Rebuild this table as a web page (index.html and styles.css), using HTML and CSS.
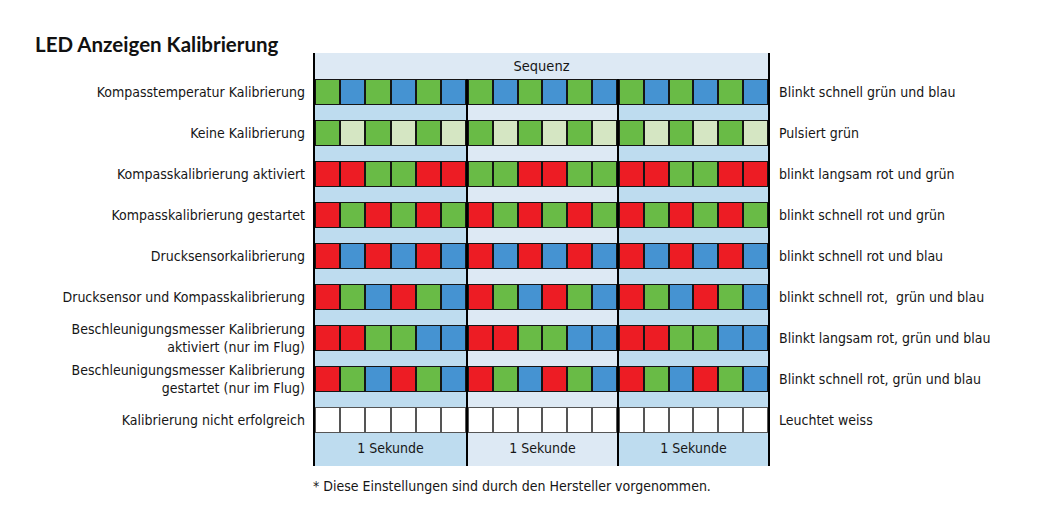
FILE: index.html
```html
<!DOCTYPE html>
<html lang="de">
<head>
<meta charset="utf-8">
<title>LED Anzeigen Kalibrierung</title>
<link rel="stylesheet" href="styles.css">
</head>
<body>
<div class="page">
  <h1 class="title">LED Anzeigen Kalibrierung</h1>
  <div class="chart">
    <div class="mid head">Sequenz</div>

    <div class="label">Kompasstemperatur Kalibrierung</div>
    <div class="mid seq">
      <div class="grp"><i class="g"></i><i class="b"></i><i class="g"></i><i class="b"></i><i class="g"></i><i class="b"></i></div>
      <div class="grp"><i class="g"></i><i class="b"></i><i class="g"></i><i class="b"></i><i class="g"></i><i class="b"></i></div>
      <div class="grp"><i class="g"></i><i class="b"></i><i class="g"></i><i class="b"></i><i class="g"></i><i class="b"></i></div>
    </div>
    <div class="desc">Blinkt schnell grün und blau</div>
    <div class="mid gap"><div class="dk"></div><div class="lt"></div><div class="dk"></div></div>

    <div class="label">Keine Kalibrierung</div>
    <div class="mid seq">
      <div class="grp"><i class="g"></i><i class="lg"></i><i class="g"></i><i class="lg"></i><i class="g"></i><i class="lg"></i></div>
      <div class="grp"><i class="g"></i><i class="lg"></i><i class="g"></i><i class="lg"></i><i class="g"></i><i class="lg"></i></div>
      <div class="grp"><i class="g"></i><i class="lg"></i><i class="g"></i><i class="lg"></i><i class="g"></i><i class="lg"></i></div>
    </div>
    <div class="desc">Pulsiert grün</div>
    <div class="mid gap"><div class="dk"></div><div class="lt"></div><div class="dk"></div></div>

    <div class="label">Kompasskalibrierung aktiviert</div>
    <div class="mid seq">
      <div class="grp"><i class="r"></i><i class="r"></i><i class="g"></i><i class="g"></i><i class="r"></i><i class="r"></i></div>
      <div class="grp"><i class="g"></i><i class="g"></i><i class="r"></i><i class="r"></i><i class="g"></i><i class="g"></i></div>
      <div class="grp"><i class="r"></i><i class="r"></i><i class="g"></i><i class="g"></i><i class="r"></i><i class="r"></i></div>
    </div>
    <div class="desc">blinkt langsam rot und grün</div>
    <div class="mid gap"><div class="dk"></div><div class="lt"></div><div class="dk"></div></div>

    <div class="label">Kompasskalibrierung gestartet</div>
    <div class="mid seq">
      <div class="grp"><i class="r"></i><i class="g"></i><i class="r"></i><i class="g"></i><i class="r"></i><i class="g"></i></div>
      <div class="grp"><i class="r"></i><i class="g"></i><i class="r"></i><i class="g"></i><i class="r"></i><i class="g"></i></div>
      <div class="grp"><i class="r"></i><i class="g"></i><i class="r"></i><i class="g"></i><i class="r"></i><i class="g"></i></div>
    </div>
    <div class="desc">blinkt schnell rot und grün</div>
    <div class="mid gap"><div class="dk"></div><div class="lt"></div><div class="dk"></div></div>

    <div class="label">Drucksensorkalibrierung</div>
    <div class="mid seq">
      <div class="grp"><i class="r"></i><i class="b"></i><i class="r"></i><i class="b"></i><i class="r"></i><i class="b"></i></div>
      <div class="grp"><i class="r"></i><i class="b"></i><i class="r"></i><i class="b"></i><i class="r"></i><i class="b"></i></div>
      <div class="grp"><i class="r"></i><i class="b"></i><i class="r"></i><i class="b"></i><i class="r"></i><i class="b"></i></div>
    </div>
    <div class="desc">blinkt schnell rot und blau</div>
    <div class="mid gap"><div class="dk"></div><div class="lt"></div><div class="dk"></div></div>

    <div class="label">Drucksensor und Kompasskalibrierung</div>
    <div class="mid seq">
      <div class="grp"><i class="r"></i><i class="g"></i><i class="b"></i><i class="r"></i><i class="g"></i><i class="b"></i></div>
      <div class="grp"><i class="r"></i><i class="g"></i><i class="b"></i><i class="r"></i><i class="g"></i><i class="b"></i></div>
      <div class="grp"><i class="r"></i><i class="g"></i><i class="b"></i><i class="r"></i><i class="g"></i><i class="b"></i></div>
    </div>
    <div class="desc">blinkt schnell rot,&nbsp; grün und blau</div>
    <div class="mid gap"><div class="dk"></div><div class="lt"></div><div class="dk"></div></div>

    <div class="label"><span>Beschleunigungsmesser Kalibrierung<br>aktiviert (nur im Flug)</span></div>
    <div class="mid seq">
      <div class="grp"><i class="r"></i><i class="r"></i><i class="g"></i><i class="g"></i><i class="b"></i><i class="b"></i></div>
      <div class="grp"><i class="r"></i><i class="r"></i><i class="g"></i><i class="g"></i><i class="b"></i><i class="b"></i></div>
      <div class="grp"><i class="r"></i><i class="r"></i><i class="g"></i><i class="g"></i><i class="b"></i><i class="b"></i></div>
    </div>
    <div class="desc">Blinkt langsam rot, grün und blau</div>
    <div class="mid gap"><div class="dk"></div><div class="lt"></div><div class="dk"></div></div>

    <div class="label"><span>Beschleunigungsmesser Kalibrierung<br>gestartet (nur im Flug)</span></div>
    <div class="mid seq">
      <div class="grp"><i class="r"></i><i class="g"></i><i class="b"></i><i class="r"></i><i class="g"></i><i class="b"></i></div>
      <div class="grp"><i class="r"></i><i class="g"></i><i class="b"></i><i class="r"></i><i class="g"></i><i class="b"></i></div>
      <div class="grp"><i class="r"></i><i class="g"></i><i class="b"></i><i class="r"></i><i class="g"></i><i class="b"></i></div>
    </div>
    <div class="desc">Blinkt schnell rot, grün und blau</div>
    <div class="mid gap"><div class="dk"></div><div class="lt"></div><div class="dk"></div></div>

    <div class="label">Kalibrierung nicht erfolgreich</div>
    <div class="mid seq">
      <div class="grp"><i class="w"></i><i class="w"></i><i class="w"></i><i class="w"></i><i class="w"></i><i class="w"></i></div>
      <div class="grp"><i class="w"></i><i class="w"></i><i class="w"></i><i class="w"></i><i class="w"></i><i class="w"></i></div>
      <div class="grp"><i class="w"></i><i class="w"></i><i class="w"></i><i class="w"></i><i class="w"></i><i class="w"></i></div>
    </div>
    <div class="desc">Leuchtet weiss</div>

    <div class="mid foot">
      <div class="dk">1 Sekunde</div><div class="lt">1 Sekunde</div><div class="dk">1 Sekunde</div>
    </div>

    <p class="note">* Diese Einstellungen sind durch den Hersteller vorgenommen.</p>
  </div>
</div>
</body>
</html>
```

FILE: styles.css
```css
html, body {
  margin: 0;
  padding: 0;
  background: #ffffff;
}

body {
  font-family: "DejaVu Sans Condensed", "Liberation Sans", sans-serif;
  color: #161616;
}

.page {
  padding-top: 35px;
}

.title {
  margin: 0 0 0 35px;
  height: 18px;
  font-family: Lato, "Open Sans", sans-serif;
  font-weight: 700;
  font-size: 20.5px;
  line-height: 18px;
  color: #111;
}

.chart {
  display: grid;
  grid-template-columns: 313px 457px auto;
  font-size: 14px;
}

.label,
.desc {
  height: 26px;
  display: flex;
  align-items: center;
  line-height: 18px;
  white-space: nowrap;
}

.label {
  grid-column: 1;
  justify-content: flex-end;
  text-align: right;
  padding-right: 8px;
}

.desc {
  grid-column: 3;
  padding-left: 9px;
}

.mid {
  grid-column: 2;
  border-left: 2px solid #000;
  border-right: 2px solid #000;
}

.head {
  height: 26px;
  line-height: 27px;
  text-align: center;
  background: #dde9f4;
  font-size: 14.5px;
}

.seq,
.gap,
.foot {
  display: grid;
  grid-template-columns: repeat(3, 1fr);
}

.seq {
  height: 26px;
}

.grp {
  display: flex;
}

.seq > .grp + .grp,
.gap > div + div,
.foot > div + div {
  border-left: 2px solid #000;
}

.grp i {
  flex: 1;
  border: 1px solid #151515;
}

.gap {
  height: 15px;
}

.dk {
  background: #bedcef;
}

.lt {
  background: #dde9f4;
}

.foot {
  height: 33px;
}

.foot > div {
  text-align: center;
  line-height: 30px;
}

.g { background: #69bb46; }
.b { background: #4593d2; }
.r { background: #ed1c24; }
.lg { background: #d5e6c3; }
.grp i.w { background: #ffffff; border-color: #555; }

.note {
  grid-column: 2 / span 2;
  margin: 11px 0 0 0;
  font-size: 14px;
  line-height: 18px;
}
```
